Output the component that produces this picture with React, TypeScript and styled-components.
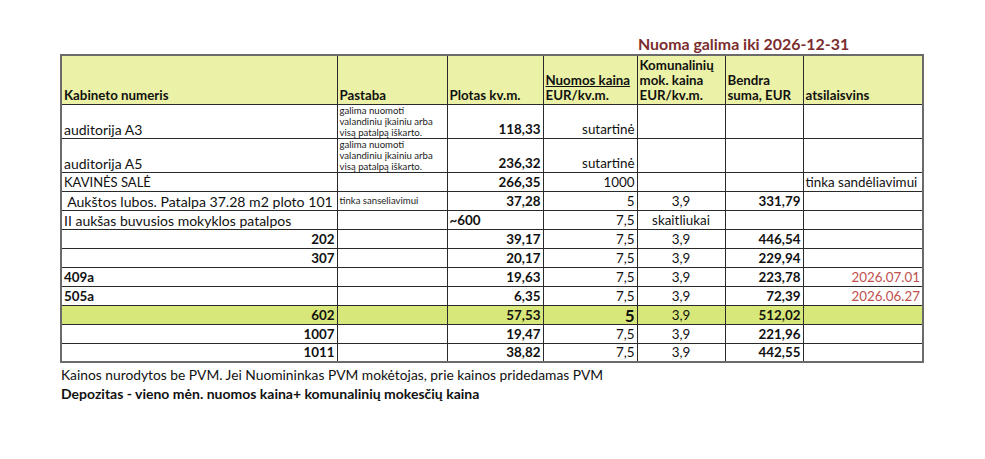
import React from 'react';
import styled, { createGlobalStyle } from 'styled-components';

const GlobalStyle = createGlobalStyle`
  body {
    margin: 0;
    background: #fff;
    font-family: Lato, "Liberation Sans", sans-serif;
    color: #111;
  }
`;

type Align = 'left' | 'right' | 'center';

interface Row {
  name: string;
  nameAlign?: Align;
  nameBold?: boolean;
  nameSize?: number;
  note?: string;
  area?: string;
  areaAlign?: Align;
  price?: string;
  priceBold?: boolean;
  util?: string;
  total?: string;
  free?: string;
  freeColor?: string;
  tall?: boolean;
  highlight?: boolean;
}

const NOTE = 'galima nuomoti valandiniu įkainiu arba visą patalpą iškarto.';

const rows: Row[] = [
  { name: 'auditorija A3', nameSize: 14, note: NOTE, area: '118,33', price: 'sutartinė', tall: true },
  { name: 'auditorija A5', nameSize: 14, note: NOTE, area: '236,32', price: 'sutartinė', tall: true },
  { name: 'KAVINĖS SALĖ', nameSize: 13, area: '266,35', price: '1000', free: 'tinka sandėliavimui' },
  {
    name: '\u00a0Aukštos lubos. Patalpa 37.28 m2 ploto 101',
    nameSize: 14.1,
    note: 'tinka sanseliavimui',
    area: '37,28',
    price: '5',
    util: '3,9',
    total: '331,79',
  },
  { name: 'II aukšas buvusios mokyklos patalpos', nameSize: 14, area: '~600', areaAlign: 'left', price: '7,5', util: 'skaitliukai' },
  { name: '202', nameAlign: 'right', nameBold: true, area: '39,17', price: '7,5', util: '3,9', total: '446,54' },
  { name: '307', nameAlign: 'right', nameBold: true, area: '20,17', price: '7,5', util: '3,9', total: '229,94' },
  { name: '409a', nameBold: true, area: '19,63', price: '7,5', util: '3,9', total: '223,78', free: '2026.07.01', freeColor: '#c0504d' },
  { name: '505a', nameBold: true, area: '6,35', price: '7,5', util: '3,9', total: '72,39', free: '2026.06.27', freeColor: '#c0504d' },
  { name: '602', nameAlign: 'right', nameBold: true, area: '57,53', price: '5', priceBold: true, util: '3,9', total: '512,02', highlight: true },
  { name: '1007', nameAlign: 'right', nameBold: true, area: '19,47', price: '7,5', util: '3,9', total: '221,96' },
  { name: '1011', nameAlign: 'right', nameBold: true, area: '38,82', price: '7,5', util: '3,9', total: '442,55' },
];

const Page = styled.div`
  padding: 34px 0 0 60px;
  width: 862px;
`;

const Title = styled.div`
  padding-left: 578px;
  height: 20px;
  font-size: 15.9px;
  font-weight: 700;
  color: #7b2d2d;
  line-height: 20px;
`;

const Sheet = styled.table`
  border-collapse: collapse;
  table-layout: fixed;
  width: 862px;
  border: 2px solid #6b6b6b;
`;

const HeadRow = styled.tr`
  height: 49px;
  background: #ebf1a6;
`;

const BodyRow = styled.tr<{ $tall?: boolean; $highlight?: boolean }>`
  height: ${({ $tall }) => ($tall ? 34 : 19)}px;
  background: ${({ $highlight }) => ($highlight ? '#d8e77a' : '#fff')};
`;

const Th = styled.th<{ $underline?: boolean }>`
  border: 1px solid #2a2a2a;
  padding: 0 2px 1px;
  text-align: left;
  vertical-align: bottom;
  font-size: 13.3px;
  font-weight: 700;
  line-height: 15px;
  span {
    text-decoration: ${({ $underline }) => ($underline ? 'underline' : 'none')};
  }
`;

const Td = styled.td<{ $align?: Align; $bold?: boolean; $size?: number; $color?: string }>`
  border: 1px solid #2a2a2a;
  padding: 0 2px 0 2px;
  vertical-align: bottom;
  text-align: ${({ $align }) => $align ?? 'left'};
  font-weight: ${({ $bold }) => ($bold ? 700 : 400)};
  font-size: ${({ $size }) => $size ?? 13.4}px;
  color: ${({ $color }) => $color ?? '#111'};
  line-height: 17px;
  white-space: nowrap;
  overflow: hidden;
`;

const NoteCell = styled.td<{ $tall?: boolean }>`
  border: 1px solid #2a2a2a;
  padding: 0 2px;
  vertical-align: ${({ $tall }) => ($tall ? 'top' : 'middle')};
  font-size: 9.6px;
  line-height: 11px;
  color: #222;
  white-space: normal;
`;

const Footer = styled.div`
  padding: 2px 0 0 1px;
  font-size: 13.8px;
  line-height: 19px;
`;

const FooterBold = styled.div`
  font-weight: 700;
  font-size: 14px;
`;

const Col = styled.col<{ $w: number }>`
  width: ${({ $w }) => $w}px;
`;

const widths = [276, 110, 96, 94, 88, 78, 120];

export default function App() {
  return (
    <>
      <GlobalStyle />
      <Page>
        <Title>Nuoma galima iki 2026-12-31</Title>
        <Sheet>
          <colgroup>
            {widths.map((w, i) => (
              <Col key={i} $w={w} />
            ))}
          </colgroup>
          <thead>
            <HeadRow>
              <Th>Kabineto numeris</Th>
              <Th>Pastaba</Th>
              <Th>Plotas kv.m.</Th>
              <Th $underline>
                <span>Nuomos kaina</span>
                <br />
                EUR/kv.m.
              </Th>
              <Th>
                Komunalinių
                <br />
                mok. kaina
                <br />
                EUR/kv.m.
              </Th>
              <Th>
                Bendra
                <br />
                suma, EUR
              </Th>
              <Th>atsilaisvins</Th>
            </HeadRow>
          </thead>
          <tbody>
            {rows.map((r, i) => (
              <BodyRow key={i} $tall={r.tall} $highlight={r.highlight}>
                <Td $align={r.nameAlign} $bold={r.nameBold} $size={r.nameSize}>
                  {r.name}
                </Td>
                <NoteCell $tall={r.tall}>{r.note}</NoteCell>
                <Td $align={r.areaAlign ?? 'right'} $bold>
                  {r.area}
                </Td>
                <Td $align="right" $bold={r.priceBold} $size={r.priceBold ? 17 : undefined}>
                  {r.price}
                </Td>
                <Td $align="center">{r.util}</Td>
                <Td $align="right" $bold>
                  {r.total}
                </Td>
                <Td $align={r.freeColor ? 'right' : 'left'} $color={r.freeColor}>
                  {r.free}
                </Td>
              </BodyRow>
            ))}
          </tbody>
        </Sheet>
        <Footer>
          <div>Kainos nurodytos be PVM. Jei Nuomininkas PVM mokėtojas, prie kainos pridedamas PVM</div>
          <FooterBold>Depozitas - vieno mėn. nuomos kaina+ komunalinių mokesčių kaina</FooterBold>
        </Footer>
      </Page>
    </>
  );
}
